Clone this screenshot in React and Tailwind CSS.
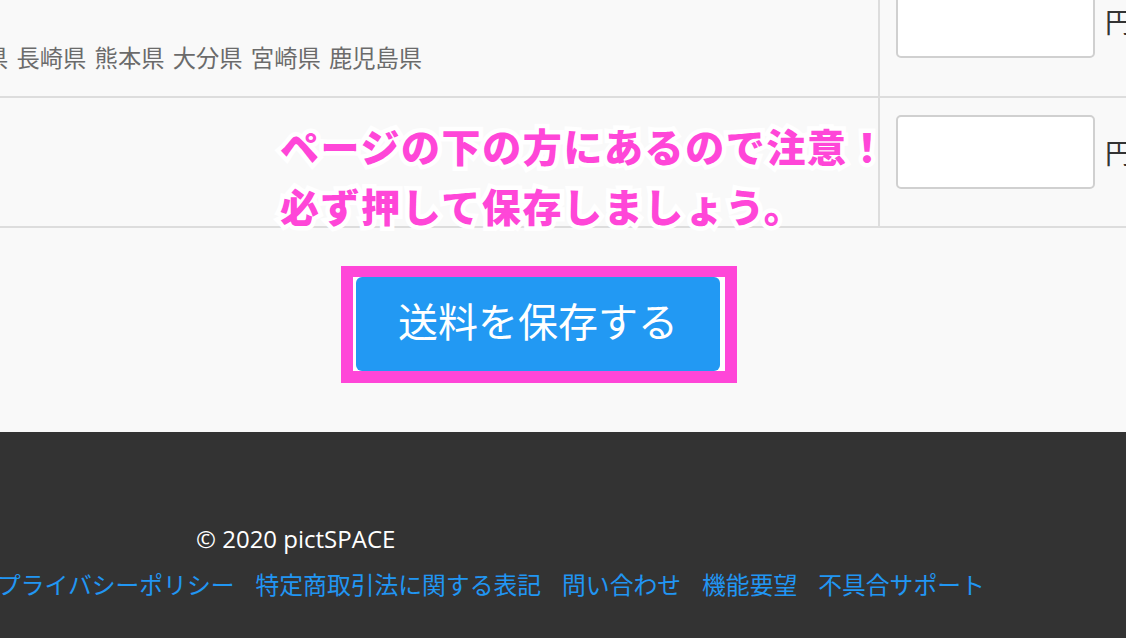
import React from 'react';

const links = ['プライバシーポリシー', '特定商取引法に関する表記', '問い合わせ', '機能要望', '不具合サポート'];

function PriceInput() {
  return (
    <div className="flex items-center gap-[10px] whitespace-nowrap">
      <div className="shrink-0 w-[199px] h-[74px] bg-white border-2 border-[#d0d0d0] rounded-[5px]" />
      <span className="text-[28px] text-[#333] leading-none">円</span>
    </div>
  );
}

export default function App() {
  return (
    <div className="w-[1126px] h-[638px] overflow-hidden bg-[#f9f9f9] font-['Noto_Sans_CJK_JP',sans-serif]">
      <div className="relative">
        {/* row 1 */}
        <div className="flex -mt-[34px] border-b-2 border-[#dddddd]">
          <div className="shrink-0 w-[880px] border-r-2 border-[#dddddd] flex items-end pb-[23px] overflow-hidden">
            <p className="-ml-[15px] whitespace-nowrap text-[23.3px] leading-[32px] [word-spacing:3px] text-[#6b6b6b]">
              県 長崎県 熊本県 大分県 宮崎県 鹿児島県
            </p>
          </div>
          <div className="shrink-0 pl-[16px] pt-[18px] pb-[38px]">
            <PriceInput />
          </div>
        </div>

        {/* row 2 */}
        <div className="flex border-b-2 border-[#dddddd]">
          <div className="shrink-0 w-[880px] border-r-2 border-[#dddddd]" />
          <div className="shrink-0 pl-[16px] pt-[17px] pb-[37px]">
            <PriceInput />
          </div>
        </div>

        {/* annotation */}
        <div className="absolute left-[280px] top-[149px] text-[39px] leading-[60px] font-black tracking-[1.6px] text-[#ff46d8] whitespace-nowrap [-webkit-text-stroke:9px_white] [paint-order:stroke_fill]">
          <p>ページの下の方にあるので注意！</p>
          <p>必ず押して保存しましょう。</p>
        </div>
      </div>

      {/* save button */}
      <div className="h-[204px] pt-[38px] pl-[341px]">
        <div className="inline-flex bg-[#ff46d8] pt-[11px] pb-[12px] px-[12px]">
          <div className="bg-white pl-[3px] pr-[5px]">
            <button className="w-[364px] h-[94px] pb-[8px] rounded-[6px] bg-[#2299f3] text-white text-[40px] leading-none">
              送料を保存する
            </button>
          </div>
        </div>
      </div>

      {/* footer */}
      <footer className="h-[206px] bg-[#333333] pt-[92px]">
        <p className="pl-[196px] text-[24px] leading-[30px] text-white font-['Open_Sans','Noto_Sans_CJK_JP',sans-serif]">
          © 2020 pictSPACE
        </p>
        <ul className="mt-[14px] -ml-[3px] flex gap-[21px] text-[23.8px] leading-[32px] text-[#2196f3] whitespace-nowrap">
          {links.map((l) => (
            <li key={l}>{l}</li>
          ))}
        </ul>
      </footer>
    </div>
  );
}
